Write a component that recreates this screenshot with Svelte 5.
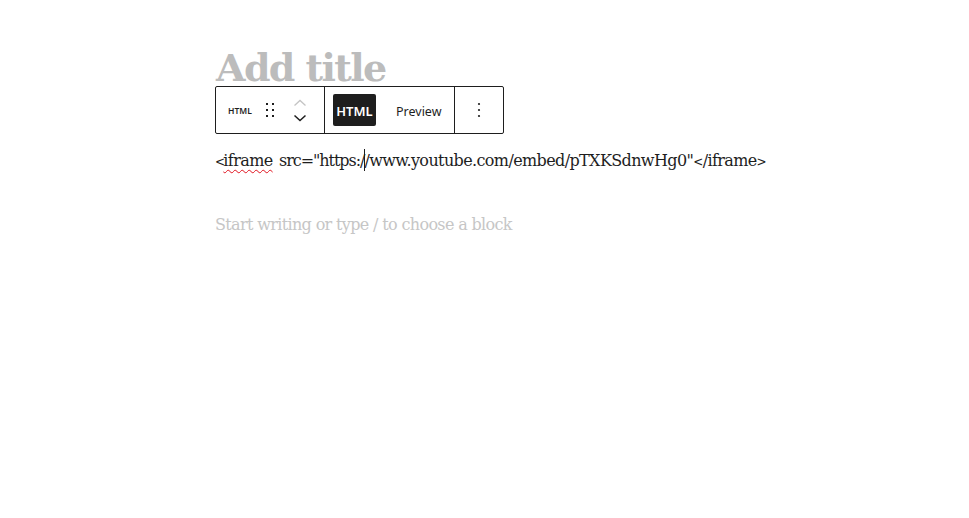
<script>
    let mode = $state("html");
    const before = "src=\"https:/";
    const after = "/www.youtube.com/embed/pTXKSdnwHg0\"";
</script>

<div class="editor">
    <h1 class="title">Add title</h1>

    <div class="toolbar">
        <div class="group block-group">
            <span class="block-icon">HTML</span>
            <svg class="drag" width="18" height="18" viewBox="0 0 18 18" aria-hidden="true">
                <path d="M5 2h2v2H5zM11 2h2v2h-2zM5 8h2v2H5zM11 8h2v2h-2zM5 14h2v2H5zM11 14h2v2h-2z" />
            </svg>
            <div class="movers">
                <svg width="14" height="9" viewBox="0 0 14 9" aria-hidden="true">
                    <path class="up" d="M1.500 7.500 7 2.500l5.500 5" />
                </svg>
                <svg width="14" height="9" viewBox="0 0 14 9" aria-hidden="true">
                    <path class="down" d="M1.500 1.500 7 6.500l5.500-5" />
                </svg>
            </div>
        </div>
        <div class="group mode-group">
            <button class="mode" class:active={mode === "html"} onclick={() => (mode = "html")}>HTML</button>
            <button class="mode" class:active={mode === "preview"} onclick={() => (mode = "preview")}>Preview</button>
        </div>
        <div class="group more-group">
            <svg width="4" height="16" viewBox="0 0 4 16" aria-hidden="true">
                <circle cx="2" cy="2" r="1.100" />
                <circle cx="2" cy="8" r="1.100" />
                <circle cx="2" cy="14" r="1.100" />
            </svg>
        </div>
    </div>

    <p class="code"><span class="angle">&lt;</span><span class="misspelled">iframe</span> <span class="attr">{before}</span><span class="caret"></span><span class="rest">{after}<span class="angle">&lt;</span>/iframe<span class="angle">&gt;</span></span></p>

    <p class="placeholder">Start writing or type / to choose a block</p>
</div>

<style>
    :global(body) {
        margin: 0;
        background: #fff;
    }
    .editor {
        width: 600px;
        margin-left: 215px;
        padding-top: 45px;
        font-family: "DejaVu Serif", "Liberation Serif", serif;
        color: #1e1e1e;
    }
    .title {
        margin: 0;
        height: 41px;
        padding-left: 1px;
        font-size: 38px;
        line-height: 46px;
        font-weight: 700;
        letter-spacing: -1.600px;
        color: #bcbcbc;
        white-space: nowrap;
    }
    .toolbar {
        display: inline-flex;
        height: 46px;
        border: 1px solid #1e1e1e;
        border-radius: 2px;
        background: #fff;
        font-family: "Noto Sans", sans-serif;
    }
    .group {
        display: flex;
        align-items: center;
        height: 100%;
        box-sizing: border-box;
    }
    .group + .group {
        border-left: 1px solid #1e1e1e;
    }
    .block-group {
        width: 108px;
        padding-left: 12px;
    }
    .block-icon {
        width: 24px;
        font-size: 8.500px;
        font-weight: 600;
        color: #1e1e1e;
    }
    .drag {
        margin-left: 9px;
        fill: #1e1e1e;
    }
    .movers {
        display: flex;
        flex-direction: column;
        gap: 7px;
        margin-left: 14px;
    }
    .movers svg {
        display: block;
        fill: none;
    }
    .up {
        stroke: #c4c4c4;
        stroke-width: 1.300;
    }
    .down {
        stroke: #1e1e1e;
        stroke-width: 1.500;
    }
    .mode-group {
        width: 130px;
        padding-left: 8px;
        gap: 20px;
    }
    .mode {
        flex: none;
        height: 32px;
        padding: 2px 0 0;
        border: 0;
        border-radius: 2px;
        background: none;
        color: #1e1e1e;
        font-family: inherit;
        font-size: 12.500px;
    }
    .mode.active {
        width: 43px;
        padding-top: 1px;
        background: #1e1e1e;
        color: #fff;
        font-size: 13px;
        font-weight: 600;
    }
    .more-group {
        width: 49px;
        justify-content: center;
    }
    .more-group svg {
        fill: #1e1e1e;
    }
    .code {
        margin: 15px 0 0;
        font-size: 16px;
        line-height: 24px;
        letter-spacing: -0.720px;
        white-space: nowrap;
    }
    .angle {
        font-size: 12px;
    }
    .misspelled {
        margin-left: -1px;
        letter-spacing: -0.600px;
        text-decoration: underline wavy #e0131f 1px;
        text-underline-offset: 3px;
    }
    .attr {
        margin-left: 2px;
        letter-spacing: -1.050px;
    }
    .rest {
        margin-left: -1px;
        letter-spacing: -0.620px;
    }
    .caret {
        display: inline-block;
        width: 1px;
        height: 22px;
        margin: 0 0 -5px;
        background: #1e1e1e;
    }
    .placeholder {
        margin: 39px 0 0;
        font-size: 16px;
        line-height: 24px;
        letter-spacing: -0.650px;
        color: #c6c6c6;
        white-space: nowrap;
    }
</style>
